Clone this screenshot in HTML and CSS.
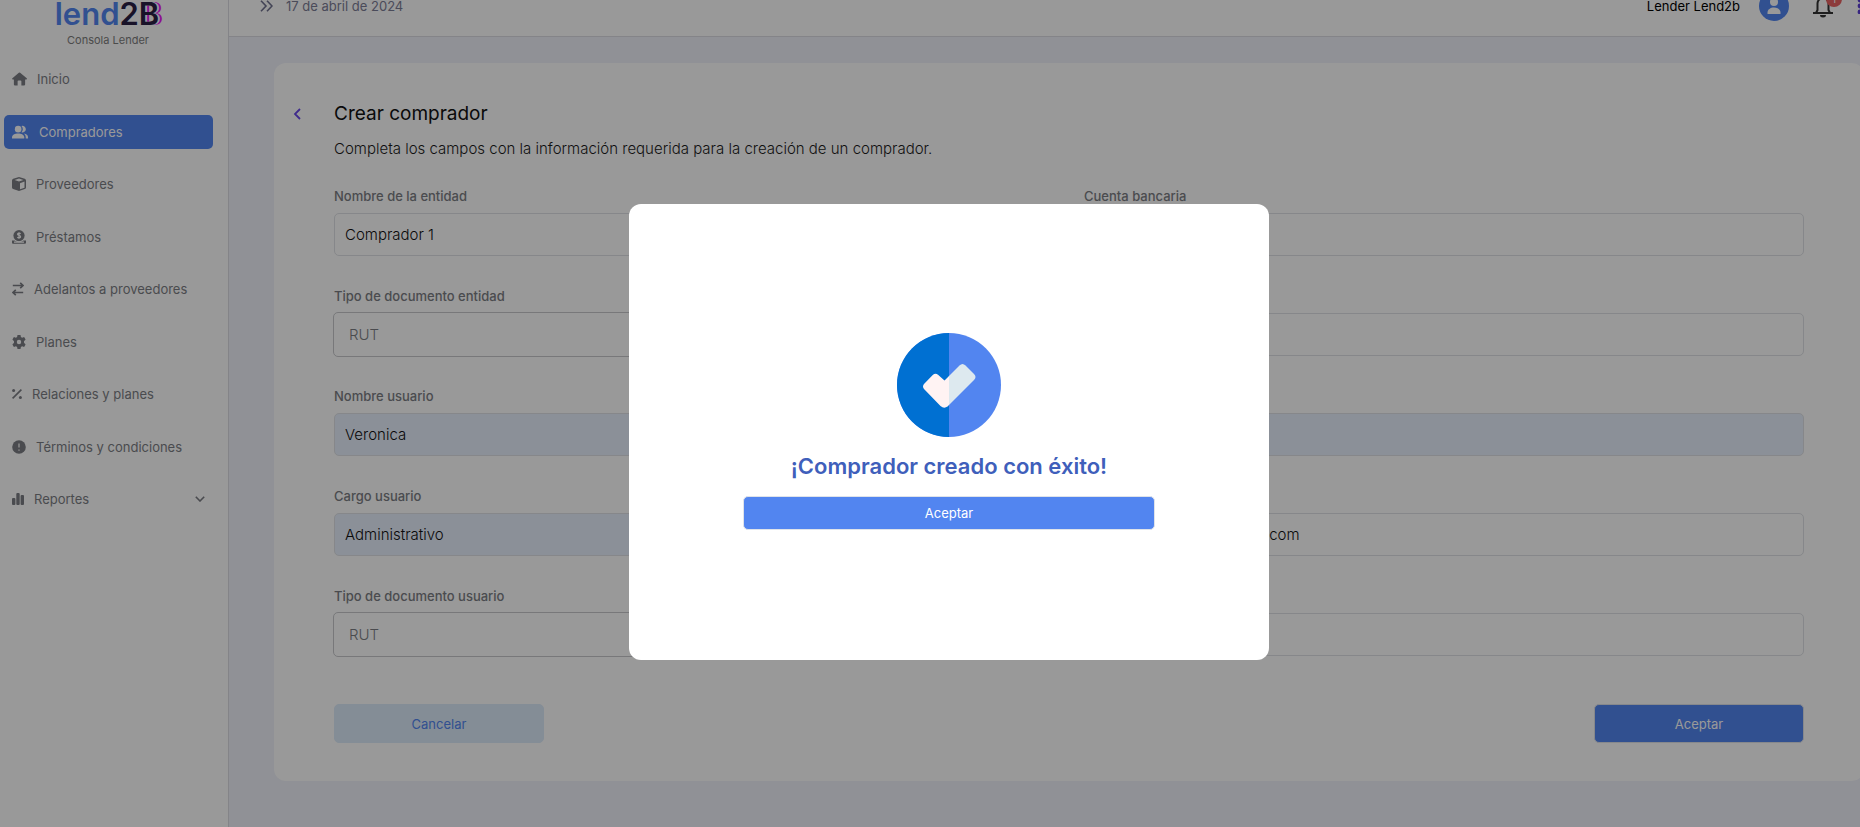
FILE: index.html
```html
<!DOCTYPE html>
<html lang="es">
<head>
    <meta charset="UTF-8">
    <meta name="viewport" content="width=device-width, initial-scale=1.0">
    <title>Lend2B - Crear comprador</title>
    <link rel="stylesheet" href="styles.css">
</head>
<body>

    <div class="layout">
        <!-- Sidebar -->
        <aside class="sidebar">
            <div class="logo"><span class="logo-lend">lend</span><span class="logo-two">2</span><span class="logo-b">B</span></div>
            <div class="logo-sub">Consola Lender</div>
            <nav class="menu">
                <a href="#" class="menu-item">
                    <svg width="15" height="14" viewBox="0 0 16 14"><path d="M8 0a1 1 0 0 1 .7.300l7 6c.500.500.200 1.200-.400 1.200H14v5.300a1.200 1.200 0 0 1-1.200 1.200H10V9.500a1 1 0 0 0-1-1H7a1 1 0 0 0-1 1V14H3.200A1.200 1.200 0 0 1 2 12.800V7.500H.8c-.6 0-.9-.7-.4-1.200l6.900-6A1 1 0 0 1 8 0z"/></svg>
                    <span>Inicio</span>
                </a>
                <a href="#" class="menu-item active">
                    <svg width="17" height="14" viewBox="0 0 18 14"><circle cx="6.500" cy="4" r="3.500"/><path d="M0 14v-1.500C0 10 3 8.500 6.500 8.500S13 10 13 12.500V14z"/><path d="M10 .7a3.500 3.500 0 1 1 0 6.600 5 5 0 0 0 0-6.600zM12.500 8.700c2.800.4 4.500 1.800 4.500 3.800V14h-2.500v-1.500c0-1.600-.8-2.900-2-3.800z"/></svg>
                    <span>Compradores</span>
                </a>
                <a href="#" class="menu-item">
                    <svg width="14" height="14" viewBox="0 0 14 14"><path fill-rule="evenodd" d="M7 0l5.800 1.800Q14 2.300 14 3.500v7q0 1-1.200 1.500L7 14l-5.800-2Q0 11.500 0 10.500v-7q0-1.200 1.200-1.700zM7 1.500L2.600 3 7 4.600 11.400 3zM8 6.200v6l4.500-1.500V4.600z"/></svg>
                    <span>Proveedores</span>
                </a>
                <a href="#" class="menu-item">
                    <svg width="14" height="14" viewBox="0 0 14 14"><path d="M0 10.500h2.500a6.600 6.600 0 0 0 9 0H14v2.300a1 1 0 0 1-1 1H1a1 1 0 0 1-1-1z"/><circle cx="7" cy="5.600" r="5.600"/><path class="cut" d="M8.600 3.800C8 2.900 5.600 2.800 5.500 4.200c0 1.500 3.100.9 3.100 2.500 0 1.400-2.600 1.400-3.200.4M7 2.200v6.600M2 12.200h10"/></svg>
                    <span>Préstamos</span>
                </a>
                <a href="#" class="menu-item">
                    <svg width="12" height="14" viewBox="0 0 12 14"><path class="line" d="M.8 3.500h10M8.200.8L11 3.500 8.200 6.200M11.200 10.500h-10M3.800 7.800L1 10.500l2.800 2.700"/></svg>
                    <span>Adelantos a proveedores</span>
                </a>
                <a href="#" class="menu-item">
                    <svg width="14" height="14" viewBox="0 0 14 14"><path fill-rule="evenodd" d="M5.500 0h3l.4 2 1.200.7 2-.7 1.500 2.600L12 6.200v1.600l1.600 1.600L12.100 12l-2-.7-1.200.7-.4 2h-3l-.4-2-1.200-.7-2 .7L.4 9.400 2 7.800V6.200L.4 4.600 1.900 2l2 .7L5.100 2zM7 4.800a2.200 2.200 0 1 0 0 4.400 2.200 2.200 0 0 0 0-4.400z"/></svg>
                    <span>Planes</span>
                </a>
                <a href="#" class="menu-item">
                    <svg width="10" height="10" viewBox="0 0 10 10"><path class="line" d="M.6 9.400L9.400.6"/><circle cx="1.600" cy="1.600" r="1.500"/><circle cx="8.400" cy="8.400" r="1.500"/></svg>
                    <span>Relaciones y planes</span>
                </a>
                <a href="#" class="menu-item">
                    <svg width="14" height="14" viewBox="0 0 14 14"><circle cx="7" cy="7" r="6.800"/><path class="cut" d="M7 3.400v4.200M7 9.400v1.400"/></svg>
                    <span>Términos y condiciones</span>
                </a>
                <a href="#" class="menu-item">
                    <svg width="12" height="12" viewBox="0 0 12 12"><rect x="0" y="5" width="3.400" height="7" rx="1"/><rect x="4.300" y="0" width="3.400" height="12" rx="1"/><rect x="8.600" y="2" width="3.400" height="10" rx="1"/></svg>
                    <span>Reportes</span>
                    <svg class="menu-arrow" width="10" height="6" viewBox="0 0 10 6"><path class="line" d="M.8.800L5 5 9.200.8"/></svg>
                </a>
            </nav>
        </aside>

        <div class="content">
            <!-- Top bar -->
            <header class="topbar">
                <button class="icon-btn" aria-label="Expandir menú">
                    <svg width="13" height="12" viewBox="0 0 13 12"><path d="M1 .8L6 6l-5 5.200M7 .8L12 6l-5 5.200" fill="none" stroke="#70728f" stroke-width="1.600"/></svg>
                </button>
                <span class="date">17 de abril de 2024</span>
                <div class="user">
                    <span class="user-name">Lender Lend2b</span>
                    <svg class="avatar" width="30" height="30" viewBox="0 0 30 30"><circle cx="15" cy="15" r="15" fill="#5285f0"/><circle cx="15" cy="11" r="4" fill="#fff"/><path d="M8.500 23v-1.500c0-3 3-5 6.500-5s6.500 2 6.500 5V23z" fill="#fff"/></svg>
                    <button class="icon-btn bell" aria-label="Notificaciones">
                        <svg width="20" height="24" viewBox="0 0 20 24"><path d="M0 19h20M3 19l1.500-3V9.500a5.500 5.500 0 0 1 11 0V16l1.500 3M10 4V1" fill="none" stroke="#333" stroke-width="2"/><path d="M7 21h6a3 2.500 0 0 1-6 0z" fill="#333"/></svg>
                        <span class="badge">1</span>
                    </button>
                    <svg class="grid-icon" width="16" height="16" viewBox="0 0 16 16" fill="#5b3fd6"><circle cx="3" cy="2" r="2.400"/><circle cx="3" cy="8" r="2.400"/><circle cx="3" cy="14" r="2.400"/><circle cx="9" cy="2" r="2.400"/><circle cx="9" cy="8" r="2.400"/><circle cx="9" cy="14" r="2.400"/></svg>
                </div>
            </header>

            <!-- Form card -->
            <main class="card">
                <div class="card-title">
                    <a href="#" class="back" aria-label="Volver">
                        <svg width="8" height="12" viewBox="0 0 8 12"><path d="M7 1L2 6l5 5" fill="none" stroke="#6a48ea" stroke-width="1.800"/></svg>
                    </a>
                    <h1>Crear comprador</h1>
                </div>
                <p class="card-text">Completa los campos con la información requerida para la creación de un comprador.</p>

                <form class="form">
                    <div class="form-grid">
                        <div class="field">
                            <label for="entidad">Nombre de la entidad</label>
                            <input type="text" id="entidad" value="Comprador 1">
                        </div>
                        <div class="field">
                            <label for="cuenta">Cuenta bancaria</label>
                            <input type="text" id="cuenta">
                        </div>
                        <div class="field">
                            <label for="tipoEntidad">Tipo de documento entidad</label>
                            <select id="tipoEntidad"><option>RUT</option></select>
                        </div>
                        <div class="field">
                            <label for="docEntidad">Documento</label>
                            <input type="text" id="docEntidad">
                        </div>
                        <div class="field">
                            <label for="nombre">Nombre usuario</label>
                            <input type="text" id="nombre" class="filled" value="Veronica">
                        </div>
                        <div class="field">
                            <label for="apellido">Apellido</label>
                            <input type="text" id="apellido" class="filled">
                        </div>
                        <div class="field">
                            <label for="cargo">Cargo usuario</label>
                            <input type="text" id="cargo" class="filled" value="Administrativo">
                        </div>
                        <div class="field">
                            <label for="correo">Correo</label>
                            <input type="text" id="correo" value="veronica.p@comprador1.com">
                        </div>
                        <div class="field">
                            <label for="tipoUsuario">Tipo de documento usuario</label>
                            <select id="tipoUsuario"><option>RUT</option></select>
                        </div>
                        <div class="field">
                            <label for="docUsuario">Documento</label>
                            <input type="text" id="docUsuario">
                        </div>
                    </div>
                    <div class="actions">
                        <button type="button" class="btn btn-cancel">Cancelar</button>
                        <button type="button" class="btn btn-accept">Aceptar</button>
                    </div>
                </form>
            </main>
        </div>
    </div>

    <!-- Success modal -->
    <div class="overlay">
        <div class="modal" role="dialog" aria-labelledby="modalTitle">
            <svg width="104" height="104" viewBox="0 0 104 104">
                <circle cx="52" cy="52" r="52" fill="#5285f0"/>
                <path d="M52 0a52 52 0 0 0 0 104z" fill="#0070d2"/>
                <path d="M52 43L62.500 32.500q3-3 6 0l8.500 8.500q3 3 0 6L52 72z" fill="#dde9ef"/>
                <path d="M52 43l-4.500 4.500L41 41.700q-2.500-2-5 0L27 51q-2 2.500 0 5l16.500 17q3.500 3 7 .5L52 72z" fill="#fff3f3"/>
            </svg>
            <h2 id="modalTitle">¡Comprador creado con éxito!</h2>
            <button type="button" class="btn modal-btn">Aceptar</button>
        </div>
    </div>

</body>
</html>
```
FILE: styles.css
```css
* {
    box-sizing: border-box;
}

body {
    font-family: Inter, sans-serif;
    font-size: 13px;
    margin: 0;
    background-color: #f0f2fa;
    color: #1c1c1c;
    overflow: hidden;
}

input,
select,
button {
    font-family: inherit;
}

.layout {
    display: flex;
    min-height: 100vh;
}

/* Sidebar */
.sidebar {
    width: 229px;
    flex-shrink: 0;
    background-color: #fff;
    border-right: 1px solid #dcdde3;
}

.logo {
    font-size: 31px;
    font-weight: 600;
    line-height: 28px;
    text-align: center;
    padding-right: 14px;
}

.logo-lend {
    color: #5285f0;
}

.logo-two,
.logo-b {
    color: #2a2145;
}

.logo-b {
    text-shadow: 2px 0 0 #fff, 4px 0 0 #e814f5;
}

.logo-sub {
    font-size: 11px;
    line-height: 24px;
    text-align: center;
    padding-right: 12px;
    color: #7d7d7d;
}

.menu {
    display: flex;
    flex-direction: column;
    gap: 18px;
    justify-content: space-between;
    height: 464px;
    padding: 10px 15px 0 4px;
}

.menu-item {
    display: flex;
    align-items: center;
    gap: 10px;
    height: 34px;
    padding: 0 8px;
    border-radius: 5px;
    color: #7c7e84;
    text-decoration: none;
}

.menu-item svg {
    fill: currentColor;
}

.menu-item .line {
    fill: none;
    stroke: currentColor;
    stroke-width: 1.600;
}

.menu-item .cut {
    fill: none;
    stroke: #fff;
    stroke-width: 1.200;
}

.menu-item.active {
    background-color: #5285f0;
    color: #fff;
}

.menu-arrow {
    margin-left: auto;
}

/* Top bar */
.content {
    flex: 1;
    min-width: 0;
}

.topbar {
    display: flex;
    align-items: center;
    height: 61px;
    margin-top: -24px;
    padding-left: 31px;
    background-color: #fff;
    border-bottom: 1px solid #dcdde3;
    overflow: hidden;
}

.icon-btn {
    display: flex;
    padding: 0;
    border: none;
    background: none;
    cursor: pointer;
}

.date {
    margin-left: 13px;
    color: #7c7d96;
}

.user {
    display: flex;
    align-items: center;
    margin-left: auto;
    margin-right: -13px;
}

.user-name {
    color: #000;
}

.avatar {
    margin: 0 24px 0 19px;
}

.bell {
    position: relative;
}

.badge {
    position: absolute;
    top: -3px;
    right: -9px;
    width: 16px;
    height: 16px;
    border-radius: 50%;
    background-color: #e96363;
    color: #fff;
    font-size: 10px;
    line-height: 16px;
    text-align: center;
}

.grid-icon {
    margin-left: 24px;
}

/* Form card */
.card {
    margin: 26px -4px 0 45px;
    padding: 37px 60px 38px;
    border-radius: 12px;
    background-color: #fff;
}

.card-title {
    display: flex;
    align-items: center;
    margin-left: -41px;
}

.back {
    display: flex;
    width: 41px;
}

h1 {
    margin: 0;
    font-size: 19px;
    font-weight: 400;
    line-height: 28px;
    color: #111;
}

.card-text {
    margin: 7px 0 23px;
    font-size: 15px;
    font-weight: 300;
    line-height: 28px;
}

.form-grid {
    display: grid;
    grid-template-columns: 1fr 1fr;
    gap: 30px;
}

.field {
    display: flex;
    flex-direction: column;
    height: 70px;
}

.field label {
    font-weight: 500;
    line-height: 20px;
    margin-bottom: 7px;
    color: #7c7e84;
}

.field input {
    height: 43px;
    padding: 0 10px;
    border: 1px solid #e0e2e6;
    border-radius: 5px;
    background-color: #fff;
    font-size: 15px;
    font-weight: 300;
    color: #111;
}

.field input.filled {
    background-color: #e8f0fe;
}

.field select {
    height: 45px;
    margin: -1px;
    padding: 0 15px;
    border: 1px solid #c8c9cc;
    border-radius: 5px;
    background-color: #fff;
    font-size: 15px;
    font-weight: 300;
    color: #7c7e84;
    appearance: none;
}

.actions {
    display: flex;
    justify-content: space-between;
    margin-top: 48px;
}

.btn {
    width: 210px;
    height: 39px;
    border: 1px solid #dfe3ea;
    border-radius: 5px;
    font-size: 13px;
    color: #fff;
    background-color: #5285f0;
    cursor: pointer;
}

.btn-cancel {
    border-color: #dcebfa;
    background-color: #dcebfa;
    color: #5285f0;
}

/* Modal */
.overlay {
    position: fixed;
    inset: 0;
    display: flex;
    align-items: center;
    justify-content: center;
    padding: 36px 0 0 38px;
    background-color: rgba(0, 0, 0, 0.4);
}

.modal {
    display: flex;
    flex-direction: column;
    align-items: center;
    width: 640px;
    min-height: 456px;
    padding: 129px 114px;
    border-radius: 12px;
    background-color: #fff;
}

.modal h2 {
    margin: 12px 0 13px;
    font-size: 22px;
    font-weight: 600;
    line-height: 34px;
    color: #3f5fbb;
}

.modal-btn {
    width: 100%;
    height: 34px;
}
```
